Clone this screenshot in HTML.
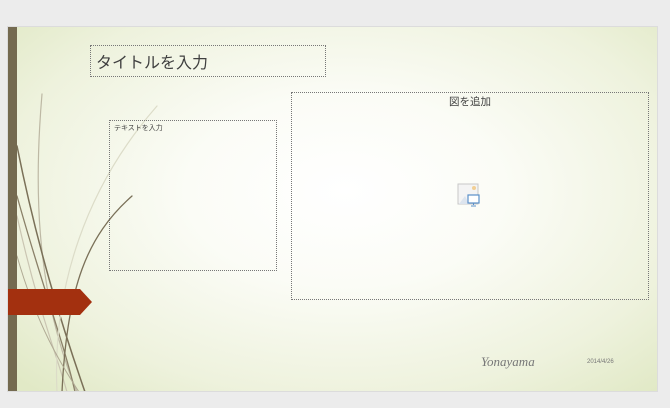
<!DOCTYPE html>
<html><head><meta charset="utf-8"><style>
body{margin:0;width:670px;height:408px;background:#ececec;position:relative;overflow:hidden;font-family:"Liberation Sans","Noto Sans CJK JP",sans-serif}
#s{position:absolute;left:7px;top:26px;width:651px;height:366px;background:radial-gradient(ellipse 70% 75% at 52% 45%,#ffffff 0%,#fbfcf6 35%,#eef2dd 75%,#e1e9c6 100%);overflow:hidden;border:1px solid #dcdcdc;box-sizing:border-box}
.bx{position:absolute;border:1px dotted #777;box-sizing:border-box}
</style></head><body>
<div id="s">
<svg width="651" height="366" style="position:absolute;left:-1px;top:-1px">
<g fill="none" stroke-linecap="round">
<path d="M35 68 C28 150 26 260 70 366" stroke="#bdb8a4" stroke-width="1.2"/>
<path d="M10 120 C30 220 55 300 78 366" stroke="#7a7058" stroke-width="1.5"/>
<path d="M10 170 C35 260 58 320 68 366" stroke="#8a8068" stroke-width="1.3"/>
<path d="M10 190 C30 280 50 330 60 366" stroke="#cac5b2" stroke-width="1.2"/>
<path d="M125 170 C80 210 60 260 55 366" stroke="#7a7058" stroke-width="1.3"/>
<path d="M150 80 C80 160 45 260 50 366" stroke="#dcdcc8" stroke-width="1.2"/>
<path d="M10 230 C30 300 55 340 72 366" stroke="#b0aa94" stroke-width="1"/>
</g>
<rect x="0" y="0" width="10" height="367" fill="#746a50"/>
<polygon points="0,263 73,263 85,276 73,289 0,289" fill="#a3300f"/>
</svg>
<div class="bx" style="left:82px;top:18px;width:236px;height:32px;font-size:16px;color:#404040;padding:3px 0 0 5px">タイトルを入力</div>
<div class="bx" style="left:101px;top:93px;width:168px;height:151px;font-size:7px;color:#404040;padding:2px 0 0 4px">テキストを入力</div>
<div class="bx" style="left:283px;top:65px;width:358px;height:208px;font-size:10.5px;color:#404040;text-align:center;padding-top:1px">図を追加
<svg width="24" height="24" style="position:absolute;left:165px;top:90px" viewBox="0 0 24 24"><rect x="1" y="1" width="20" height="20" fill="#f4f4f4" stroke="#c8c8c8"/><circle cx="17" cy="5" r="2" fill="#f2cf95"/><path d="M2 21 L8 13 L12 21Z" fill="#dce4ee"/><rect x="11" y="12" width="11" height="8" fill="#fff" stroke="#5a8fc8" stroke-width="1.2"/><path d="M16.5 20v2M14 23h5" stroke="#5a8fc8"/></svg></div>
<div style="position:absolute;left:473px;top:327px;font-family:'Liberation Serif',serif;font-style:italic;font-size:13px;color:#777">Yonayama</div>
<div style="position:absolute;left:579px;top:332px;font-size:6px;color:#777">2014/4/26</div>
</div>
</body></html>
